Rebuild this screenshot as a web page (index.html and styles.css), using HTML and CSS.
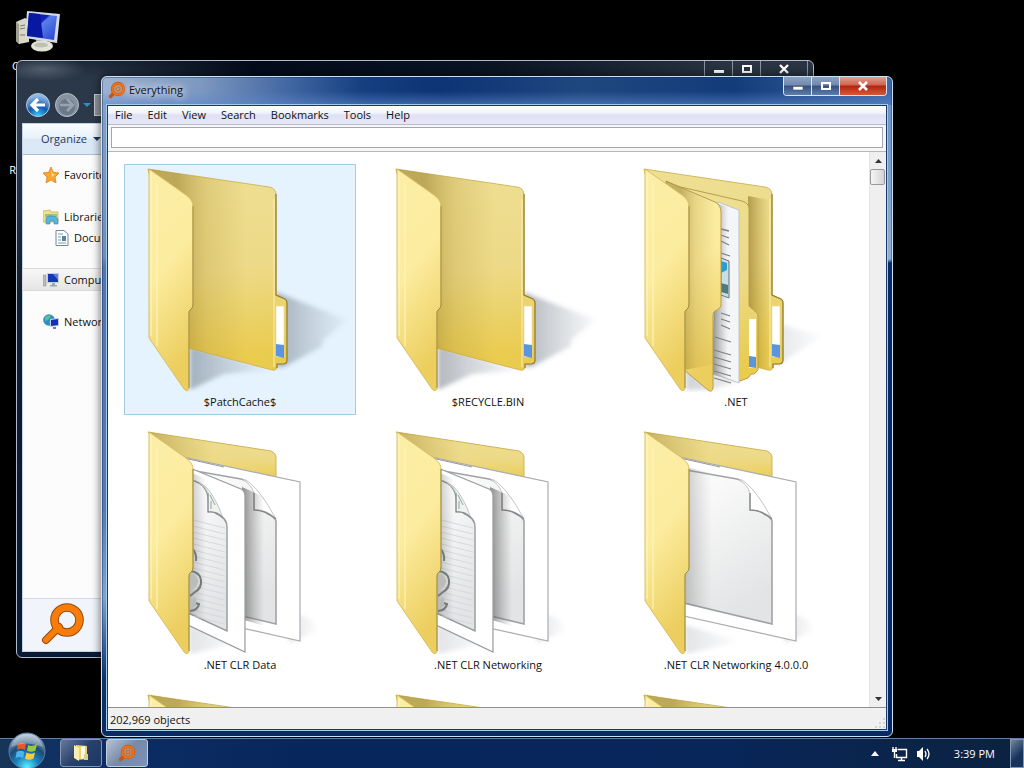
FILE: index.html
```html
<!DOCTYPE html>
<html lang="en">
<head>
<meta charset="utf-8">
<title>Everything</title>
<link rel="stylesheet" href="styles.css">
</head>
<body>
<svg class="defs" aria-hidden="true">
  <defs>
    <linearGradient id="flap" x1="0" y1="0" x2="0.25" y2="1"><stop offset="0" stop-color="#fbeea6"/><stop offset=".5" stop-color="#fcec9f"/><stop offset="1" stop-color="#ecce5e"/></linearGradient>
    <linearGradient id="back" x1="0" y1="0" x2="0.1" y2="1"><stop offset="0" stop-color="#eedf93"/><stop offset=".55" stop-color="#edda88"/><stop offset="1" stop-color="#e9cb4e"/></linearGradient>
    <linearGradient id="shade" x1="0" x2="1"><stop offset="0" stop-color="#8b7220" stop-opacity=".6"/><stop offset="1" stop-color="#a88a2c" stop-opacity="0"/></linearGradient>
    <linearGradient id="deep" x1="0" x2="1"><stop offset=".3" stop-color="#8b7220" stop-opacity=".5"/><stop offset=".6" stop-color="#a88a2c" stop-opacity=".22"/><stop offset="1" stop-color="#a88a2c" stop-opacity="0"/></linearGradient>
    <linearGradient id="gray" x1="0" x2="1"><stop offset="0" stop-color="#555" stop-opacity=".65"/><stop offset="1" stop-color="#777" stop-opacity="0"/></linearGradient>
    <linearGradient id="sheet" x1="0" y1="0" x2="0.4" y2="1"><stop offset="0" stop-color="#fff"/><stop offset="1" stop-color="#e3e4e5"/></linearGradient>
    <linearGradient id="cast" x1="0" x2="1"><stop offset="0" stop-color="#4b5563" stop-opacity=".42"/><stop offset="1" stop-color="#6b7686" stop-opacity=".04"/></linearGradient>
    <filter id="soft" x="-20%" y="-20%" width="140%" height="140%"><feGaussianBlur stdDeviation="2"/></filter>
    <symbol id="front" viewBox="0 0 232 228">
      <path d="M25 5 62 31Q69 36 69 42V141Q69 144 66 146 65 147 65 150V224Q64 229 60 225L25 174Z" fill="url(#flap)" stroke="#d9bf66"/>
      <path d="M27 8V172M33 20V182" stroke="#fff6bd" stroke-width="1.5" opacity=".7"/>
      <path d="M69 42V141Q69 144 66 146 65 147 65 150V224" fill="none" stroke="#9f8a40"/>
    </symbol>
    <symbol id="rear" viewBox="0 0 232 228">
      <path d="M24 5 145 23Q152 24 152 31V131L161 135Q163 136 163 139V196Q163 200 159 200H153V204Q152 207 148 206L64 184Z" fill="url(#back)" stroke="#d2b85e"/>
      <path d="M152 30V131L161 135Q163 136 163 139V196Q163 200 159 200H153V204" fill="none" stroke="#957d30" stroke-width="1.2"/>
      <path d="M150 35V203" stroke="#faeeb0"/>
      <path d="M152 142H160V193H152Z" fill="#fff" stroke="#e9d8a0" stroke-width=".7"/>
      <path d="M152 180 160 181V194L152 192Z" fill="#5b94df"/>
    </symbol>
    <symbol id="folder" viewBox="0 0 232 228">
      <path d="M152 128 224 156 199 176V182L160 203H152Z" fill="url(#cast)" filter="url(#soft)"/>
      <path d="M66 182 148 206 100 210 66 226Z" fill="url(#cast)" filter="url(#soft)"/>
      <use href="#rear"/>
      <path d="M24 5 122 20V200L64 184Z" fill="url(#deep)"/>
      <use href="#front"/>
    </symbol>
    <symbol id="folder-full" viewBox="0 0 232 228">
      <path d="M152 158 202 172 160 200H152Z" fill="url(#cast)" opacity=".4" filter="url(#soft)"/>
      <path d="M66 205 150 206 92 226H66Z" fill="url(#cast)" opacity=".6" filter="url(#soft)"/>
      <use href="#rear"/>
      <path d="M128 32 150 36V206L138 203V151L129 145Z" fill="url(#shade)"/>
      <path d="M52 21 122 37Q129 39 129 45V142L136 148Q138 149 138 153V206L134 210H131L128 214 120 217 92 210Z" fill="url(#back)" stroke="#b89e4c"/>
      <path d="M129 155H136V204H129Z" fill="#fff"/><path d="M129 192 136 193V204L129 203Z" fill="#5b94df"/>
      <path d="M98 38 119 46V219L92 209Z" fill="#f4f5f6" stroke="#c0c4c8"/>
      <path d="M98 40 108 43V215L92 209Z" fill="url(#gray)"/>
      <path d="M101 65l8 2m-8 4 8 3m-8 3 8 4m-8 8 9 3m-9 57 9 3m-9 3 9 3m-9 3 9 4m-15 8 16 5m-17 8 17 5m-17 2 17 5m-17 2 17 5m-17 2 17 5m-17 2 17 5" stroke="#7b8083" stroke-width="1.3"/>
      <path d="M101 94 109 97V134L101 131Z" fill="#c8dde6" stroke="#65747d"/><path d="M101 97l6 2v7l-6 3Z" fill="#2c9dcc"/><path d="M101 119l7 2v9l-7-2Z" fill="#4d7b80"/>
      <path d="M46 17 95 38Q101 41 101 48V141Q101 144 97 146 93 147 93 151V224Q92 229 88 226L64 206Z" fill="url(#flap)" stroke="#b89e4c"/>
      <path d="M46 17 96 39V200L64 206Z" fill="url(#deep)"/>
      <use href="#front"/>
    </symbol>
    <symbol id="docbase" viewBox="0 0 232 228">
      <path d="M165 185 188 192 194 203 165 216Z" fill="url(#cast)" opacity=".4" filter="url(#soft)"/>
      <path d="M64 198 120 214 66 227Z" fill="url(#cast)" opacity=".4" filter="url(#soft)"/>
      <path d="M24 5 147 24Q152 26 152 31V60L64 40Z" fill="url(#back)" stroke="#cfb456"/>
      <path d="M24 5 90 16V34L64 36Z" fill="url(#shade)" opacity=".7"/>
      <path d="M59 30 176 55V214L64 189Z" fill="#fff" stroke="#a9acaf" stroke-width="1.2"/>
      <path d="M60 31 100 40" stroke="#96989a"/>
      <path d="M66 43 117 52Q126 54 131 65 136 84 146 88 152 91 152 95V197L64 176Z" fill="url(#sheet)" stroke="#a0a3a6" stroke-width="1.6"/>
      <path d="M119 53Q127 57 130 66V83Q142 83 152 92 138 66 126 56 122 52 119 53Z" fill="#fff" stroke="#c3c5c7"/>
      <path d="M130 66V83Q142 83 152 92" fill="none" stroke="#85888b" stroke-width="1.4"/>
    </symbol>
    <symbol id="folder-doc" viewBox="0 0 232 228">
      <use href="#docbase"/>
      <path d="M66 40 92 46V183L64 176Z" fill="url(#gray)" opacity=".5"/>
      <use href="#front"/>
    </symbol>
    <symbol id="folder-docs" viewBox="0 0 232 228">
      <use href="#docbase"/>
      <path d="M118 60 140 70V199L120 193Z" fill="url(#gray)"/>
      <path d="M66 41 117 62Q121 64 121 69V225L64 198Z" fill="#fff" stroke="#979a9e" stroke-width="1.2"/>
      <path d="M66 52 75 56Q82 60 84 70 86 85 95 88 103 92 103 100V204L64 186Z" fill="url(#sheet)" stroke="#95999d" stroke-width="1.4"/>
      <path d="M69 93l32 8m-32-2 32 8m-32-2 32 8m-32-2 32 8m-32-2 32 8m-32-2 32 8m-32-2 32 8m-32-2 32 8m-32-2 32 8m-32-2 32 8m-32-2 32 8m-32-2 32 8m-32-2 32 8m-32-2 32 8m-32-2 32 8m-32-2 32 8m-32-2 32 8" stroke="#cfd5dd" stroke-width=".8"/>
      <path d="M76 56Q82 60 84 66V85Q93 84 99 91 91 69 82 60Z" fill="#f0f2f0" stroke="#c0c4c5"/>
      <path d="M84 66V85Q93 84 99 91" fill="none" stroke="#818689" stroke-width="1.2"/>
      <path d="M86 68l5 10M87 74v8" stroke="#8aa398"/>
      <path d="M66 45 82 52V194L64 186Z" fill="url(#gray)" opacity=".6"/>
      <path d="M69 122q4 6 3 12M66 144q10 1 11 9t-6 12l-5 4M66 184q8-1 9-7l-4-1" fill="none" stroke="#747b79" stroke-width="2"/>
      <path d="M66 147q8 1 8 7t-8 9ZM66 172l6-1v8l-6 3Z" fill="#b9bcb9"/>
      <use href="#front"/>
    </symbol>
    <symbol id="magnifier" viewBox="0 0 44 44">
      <path d="M18 25 5 38" stroke="#8e4b13" stroke-width="8" stroke-linecap="round"/>
      <circle cx="26" cy="18" r="12.5" fill="none" stroke="#8e4b13" stroke-width="8.6"/>
      <path d="M18 25 5 38" stroke="#f97b08" stroke-width="6" stroke-linecap="round"/>
      <circle cx="26" cy="18" r="12.5" fill="none" stroke="#f97b08" stroke-width="6.6"/>
    </symbol>
    <symbol id="magnifier-small" viewBox="0 0 18 18">
      <path d="M6 12 2.500 15.500" stroke="#c9540e" stroke-width="3.400" stroke-linecap="round"/>
      <circle cx="10" cy="8" r="5.600" fill="#cf9468" fill-opacity=".6" stroke="#c9540e" stroke-width="3.200"/>
      <circle cx="10" cy="8" r="5.600" fill="none" stroke="#ee7418" stroke-width="2"/>
      <circle cx="10" cy="8" r="2" fill="none" stroke="#d96a22" stroke-width="1.2"/>
    </symbol>
    <linearGradient id="screen" x1="0" x2="1" y2="1"><stop offset="0" stop-color="#0a1ba6"/><stop offset=".4" stop-color="#0d22b8"/><stop offset=".45" stop-color="#5a80e8"/><stop offset="1" stop-color="#2440d4"/></linearGradient>
    <radialGradient id="orb" cx=".5" cy=".95" r=".9"><stop offset="0" stop-color="#5ff0ff"/><stop offset=".35" stop-color="#1b86c0"/><stop offset=".65" stop-color="#1c4b78"/><stop offset="1" stop-color="#a8bccd"/></radialGradient>
    <radialGradient id="backblue" cx=".5" cy="1" r=".9"><stop offset="0" stop-color="#37d5ff"/><stop offset=".5" stop-color="#125ab0"/><stop offset="1" stop-color="#8fb8e4"/></radialGradient>
  </defs>
</svg>

<main class="desktop">
  <div class="shortcut computer">
    <svg width="46" height="44" viewBox="0 0 46 44" aria-hidden="true">
      <path d="M1 12 10 8 14 10V32L4 34 1 31Z" fill="#d9d8c8"/><path d="M1 12 4 14V34L1 31Z" fill="#9d9d90"/><path d="M5 16 10 15M5 19 10 18M5 25 11 25" stroke="#77776d"/>
      <path d="M20 28H32L31 36H23Z" fill="#a9aaa2"/><ellipse cx="27" cy="36" rx="11" ry="5.5" fill="#e3e3d7"/><ellipse cx="26" cy="35" rx="7" ry="2.5" fill="#bfc0b5"/>
      <path d="M12 1 45 4 42 33 10 28Z" fill="#d5d9e2"/><path d="M14 3 42 6 39 30 12 26Z" fill="url(#screen)"/><path d="M14 3 25 4 28 28 12 26Z" fill="#0818a0"/>
    </svg>
    <span>Computer</span>
  </div>
  <div class="shortcut bin"><span>Recycle Bin</span></div>

  <section class="window explorer" aria-label="Computer">
    <div class="caption" role="group" aria-label="Window controls">
      <button aria-label="Minimize"><svg width="12" height="10" viewBox="0 0 12 10"><path d="M1 6H11V9H1Z" fill="#fff"/></svg></button>
      <button aria-label="Maximize"><svg width="12" height="10" viewBox="0 0 12 10"><path d="M2 2H10V8H2Z" fill="none" stroke="#fff" stroke-width="2"/></svg></button>
      <button class="close" aria-label="Close"><svg width="12" height="10" viewBox="0 0 12 10"><path d="M2 1 10 9M10 1 2 9" stroke="#fff" stroke-width="2.4"/></svg></button>
    </div>
    <nav class="travel" aria-label="History">
      <button aria-label="Back"><svg width="26" height="26" viewBox="0 0 26 26"><circle cx="13" cy="13" r="11.5" fill="url(#backblue)" stroke="#b4c9de"/><path d="M20 13H8M13 7 7 13 13 19" fill="none" stroke="#fff" stroke-width="3.2"/></svg></button>
      <button aria-label="Forward"><svg width="26" height="26" viewBox="0 0 26 26"><circle cx="13" cy="13" r="11.5" fill="#8792a0" stroke="#b5bfca"/><circle cx="13" cy="15" r="8" fill="#6d7886"/><path d="M6 13H18M13 7 19 13 13 19" fill="none" stroke="#98a3af" stroke-width="2.6"/></svg></button>
      <svg width="8" height="6" viewBox="0 0 8 6" aria-hidden="true"><path d="M0 1H8L4 5Z" fill="#2f8fc4"/></svg>
      <span class="address"></span>
    </nav>
    <div class="pane">
      <div class="commands"><button>Organize <svg width="8" height="5" viewBox="0 0 8 5"><path d="M0 0H8L4 4Z" fill="#1e395b"/></svg></button></div>
      <ul class="tree">
        <li><a href="#favorites"><svg width="16" height="16" viewBox="0 0 16 16"><path d="M8 0 10.300 5.300 16 6 12 10 13 16 8 13 3 16 4 10 0 6 5.700 5.300Z" fill="#f9a72b" stroke="#d9802a" stroke-width=".8"/><path d="M8 3 9.500 7 12 7 9 10Z" fill="#ffe28a"/></svg>Favorites</a></li>
        <li class="group"><a href="#libraries"><svg width="16" height="16" viewBox="0 0 16 16"><path d="M0 2 7 1 8 3H15V13H0Z" fill="#f3df86" stroke="#c0aa58" stroke-width=".7"/><path d="M2 5H14V8H2Z" fill="#8cc886"/><path d="M3 15V10Q3 7 8 7T15 10V15H11V12H7V15Z" fill="#59b5dd" stroke="#3787b0" stroke-width=".6"/></svg>Libraries</a></li>
        <li class="child"><a href="#documents"><svg width="14" height="16" viewBox="0 0 14 16"><path d="M1 .5H9L13 4V15.500H1Z" fill="#fff" stroke="#6f8a99"/><path d="M3 4H8M3 7H6M3 10H6M3 13H11" stroke="#7f9dad"/><path d="M7 6H11V11H7Z" fill="#4f889e"/></svg>Documents</a></li>
        <li class="group chosen"><a href="#computer"><svg width="16" height="16" viewBox="0 0 16 16"><path d="M0 3H3V14H0Z" fill="#b9bdb9" stroke="#858985" stroke-width=".5"/><path d="M4 1H16V11H4Z" fill="#c7cdda"/><path d="M5 2H15V10H5Z" fill="#1537bd"/><path d="M10 2H15V8Z" fill="#5b82e2"/><path d="M9 11H12V13H14V14.500H7V13H9Z" fill="#97a8bb"/></svg>Computer</a></li>
        <li class="group"><a href="#network"><svg width="16" height="16" viewBox="0 0 16 16"><circle cx="6" cy="6" r="5.800" fill="#2e8fc6"/><path d="M2 3Q6 0 8 2L5 6 2 7ZM6 8 9 7 8 11Z" fill="#5ec08d"/><path d="M7 5 16 4V12L7 13Z" fill="#c1ccdd"/><path d="M8 6 15 5V11L8 12Z" fill="#142fbb"/><path d="M10 13H13V15H10Z" fill="#6a7ec4"/></svg>Network</a></li>
      </ul>
      <div class="details"><svg width="44" height="44" aria-hidden="true"><use href="#magnifier"/></svg></div>
    </div>
  </section>

  <section class="window everything" aria-label="Everything">
    <header class="titlebar">
      <svg width="18" height="18" aria-hidden="true"><use href="#magnifier-small"/></svg>
      <h1>Everything</h1>
      <div class="caption bright" role="group" aria-label="Window controls">
        <button aria-label="Minimize"><svg width="12" height="10" viewBox="0 0 12 10"><path d="M1 5.500H11V9H1Z" fill="#fff" stroke="#44536b" stroke-width=".6"/></svg></button>
        <button aria-label="Maximize"><svg width="12" height="10" viewBox="0 0 12 10"><path d="M2 2H10V8H2Z" fill="none" stroke="#fff" stroke-width="2"/></svg></button>
        <button class="close" aria-label="Close"><svg width="12" height="10" viewBox="0 0 12 10"><path d="M2 1 10 9M10 1 2 9" stroke="#fff" stroke-width="2.600"/></svg></button>
      </div>
    </header>
    <div class="client">
      <nav class="menubar" aria-label="Menu">
        <button>File</button><button>Edit</button><button>View</button><button>Search</button><button>Bookmarks</button><button>Tools</button><button>Help</button>
      </nav>
      <div class="searchbar"><input type="text" aria-label="Search"></div>
      <div class="results">
        <ul class="grid">
          <li class="item selected"><svg viewBox="0 0 232 228"><use href="#folder"/></svg><span>$PatchCache$</span></li>
          <li class="item"><svg viewBox="0 0 232 228"><use href="#folder"/></svg><span>$RECYCLE.BIN</span></li>
          <li class="item"><svg viewBox="0 0 232 228"><use href="#folder-full"/></svg><span>.NET</span></li>
          <li class="item"><svg viewBox="0 0 232 228"><use href="#folder-docs"/></svg><span>.NET CLR Data</span></li>
          <li class="item"><svg viewBox="0 0 232 228"><use href="#folder-docs"/></svg><span>.NET CLR Networking</span></li>
          <li class="item"><svg viewBox="0 0 232 228"><use href="#folder-doc"/></svg><span>.NET CLR Networking 4.0.0.0</span></li>
          <li class="item"><svg viewBox="0 0 232 228"><use href="#folder"/></svg></li>
          <li class="item"><svg viewBox="0 0 232 228"><use href="#folder"/></svg></li>
          <li class="item"><svg viewBox="0 0 232 228"><use href="#folder"/></svg></li>
        </ul>
        <div class="scrollbar">
          <button aria-label="Scroll up"><svg width="7" height="4" viewBox="0 0 7 4"><path d="M0 4H7L3.500 0Z" fill="#333"/></svg></button>
          <span class="thumb"></span>
          <button class="down" aria-label="Scroll down"><svg width="7" height="4" viewBox="0 0 7 4"><path d="M0 0H7L3.500 4Z" fill="#333"/></svg></button>
        </div>
      </div>
      <footer class="status"><span>202,969 objects</span><svg width="12" height="12" viewBox="0 0 12 12" aria-hidden="true"><path d="M9 1h2v2H9zM9 5h2v2H9zM9 9h2v2H9zM5 5h2v2H5zM5 9h2v2H5zM1 9h2v2H1z" fill="#d3d3d3"/></svg></footer>
    </div>
  </section>

  <footer class="taskbar">
    <button class="start" aria-label="Start"><svg width="38" height="38" viewBox="0 0 38 38">
      <circle cx="19" cy="19" r="18" fill="url(#orb)" stroke="#5e7f9e"/>
      <path d="M10 12Q14 9 18 12L17 18Q13 15.500 9 18Z" fill="#e8572a"/><path d="M20 13Q24 15.500 29 12L27.500 18.500Q23 21 19 18.500Z" fill="#9ac93b"/><path d="M8.500 20Q12 17.500 16.500 20L15 26Q11 24 7.500 26.500Z" fill="#4fb2ea"/><path d="M18.500 20.500Q23 23 27 20.500L25.500 26.500Q21 29 17 26.500Z" fill="#fbcd3a"/>
      <path d="M3 15Q8 2 19 2T35 15Q19 8 3 15Z" fill="#fff" opacity=".28"/>
    </svg></button>
    <button class="task" aria-label="Windows Explorer"><svg width="16" height="18" viewBox="0 0 16 18"><path d="M3 1 14 2V15L4 16Z" fill="#e9d27a"/><path d="M8 3 12 2V14L8 15Z" fill="#fffbe0"/><path d="M1 1 6 4V17L1 14Z" fill="#fbeeb0"/><path d="M11 10H15V16H11Z" fill="#d9cf93"/></svg></button>
    <button class="task active" aria-label="Everything"><svg width="18" height="18"><use href="#magnifier-small"/></svg></button>
    <div class="tray">
      <button aria-label="Show hidden icons"><svg width="8" height="5" viewBox="0 0 8 5"><path d="M0 5H8L4 0Z" fill="#fff"/></svg></button>
      <svg class="network" width="16" height="16" viewBox="0 0 16 16" role="img" aria-label="Network"><path d="M5.500 3.500H14.500V11.500H4.500V8M9.500 12V14M6 14.500H13M2.500 6V12M1 1V4M4 1V4" fill="none" stroke="#fff" stroke-width="1.4"/><path d="M0 3H5V6H0Z" fill="#fff"/></svg>
      <svg class="sound" width="16" height="16" viewBox="0 0 16 16" role="img" aria-label="Volume"><path d="M1 5H3L7 1V15L3 11H1Z" fill="#fff"/><path d="M9 5Q11 8 9 11M11 3Q15 8 11 13" fill="none" stroke="#fff" stroke-width="1.300"/></svg>
      <time>3:39 PM</time>
      <button class="peek" aria-label="Show desktop"></button>
    </div>
  </footer>
</main>
</body>
</html>
```

FILE: styles.css
```css
* { box-sizing: border-box; }
html, body { height: 100%; margin: 0; }
body { background: #000; color: #111; font: 11px/16px "Open Sans", "Noto Sans", sans-serif; overflow: hidden; }
button { background: none; border: 0; padding: 0; font: inherit; color: inherit; display: flex; align-items: center; justify-content: center; }
ul { list-style: none; margin: 0; padding: 0; }
a { color: inherit; text-decoration: none; }
svg { flex: none; display: block; }
.defs { position: absolute; width: 0; height: 0; }

.desktop { position: relative; height: 100%; }
.shortcut { position: absolute; left: 0; width: 76px; display: flex; flex-direction: column; align-items: center; gap: 4px; color: #fff; }
.computer { top: 10px; }
.bin { top: 162px; }

.window { position: absolute; display: flex; flex-direction: column; border: 1px solid #aebccb; border-radius: 6px; }

/* Explorer */
.explorer {
  inset: 60px 210px 110px 16px;
  padding: 0 5px 5px;
  background:
    radial-gradient(ellipse 44px 12px at 26px 8px, #6b7584aa, transparent),
    linear-gradient(90deg, transparent 10%, #030b1a 30%, #0a1422 60%, #2a3442 90%) top / 100% 17px no-repeat,
    linear-gradient(180deg, #1c2736 0, #2a3747 16px, #2c3a4c 64px, #101c2c 240px, #0b1a34 100%);
}
.caption { display: flex; height: 17px; align-self: flex-end; }
.caption button { width: 28px; border: 1px solid #8793a2; border-top: 0; border-right: 0; }
.caption .close { width: 48px; border-right: 1px solid #8793a2; }
.travel { display: flex; align-items: center; gap: 3px; height: 45px; padding: 8px 0 0 3px; }
.address { width: 200px; height: 22px; background: #8d949c; border: 1px solid #c4cad0; }
.pane { flex: 1; display: flex; flex-direction: column; border: 1px solid #c3d4e8; background: #fcfcfc; }
.commands { height: 31px; display: flex; padding-left: 18px; color: #1e395b; background: linear-gradient(#fafdff, #e6f0fa 50%, #dce7f4 50%, #dbe9f6); border-bottom: 1px solid #a9bdd2; }
.commands button { gap: 6px; }
.tree { flex: 1; padding-top: 9px; }
.tree li { height: 21px; padding-left: 20px; }
.tree a { display: flex; align-items: center; gap: 5px; height: 100%; }
.tree .group { margin-top: 21px; }
.tree .child { padding-left: 32px; }
.tree .chosen { background: linear-gradient(#f8f8f8, #e5e5e6); box-shadow: 0 0 0 1px #d9d9d9; }
.details { height: 53px; padding: 3px 0 0 18px; background: #f1f5fb; border-top: 1px solid #d0dae8; }

/* Everything */
.everything {
  inset: 76px 131px 31px 101px;
  padding: 0 5px 6px;
  border-color: #c8e4f4;
  background:
    linear-gradient(transparent 50%, #5c86cc99) top / 100% 28px no-repeat,
    linear-gradient(90deg, #9fb2d0 0, #7c97c0 100px, #466aa4 180px, #143f80 260px, #0d3474 340px, #1f477f 480px, #123c7a 80%, #3e6aa8 100%) top / 100% 28px no-repeat,
    linear-gradient(#6a8fc0, #92b0d0 182px, #0c2b66 186px, #0a2862) right / 50% 100% no-repeat,
    linear-gradient(#8aa4c8, #6d8dbb 180px, #5474b4 190px, #5777b8 430px, #7da3d3 520px, #0d3472 600px, #0a2862) left / 50% 100% no-repeat;
  box-shadow: inset 0 0 0 1px #0c2a5c66, 0 0 8px 1px #0008;
}
.titlebar { height: 28px; display: flex; align-items: center; gap: 3px; padding: 0 0 2px 1px; }
.titlebar h1 { flex: 1; margin: 0; font: inherit; text-shadow: 0 0 8px #fff, 0 0 8px #fffc; }
.caption.bright { height: 19px; align-self: flex-start; border: 1px solid #d9e4f0; border-top: 0; border-radius: 0 0 4px 4px; overflow: hidden; }
.bright button { border: 0; border-right: 1px solid #d9e4f0; background: linear-gradient(#8ba2c4, #7389ac 45%, #35507e 50%, #5c7dae); }
.bright .close { width: 46px; border: 0; background: linear-gradient(#e0a090, #cd6350 45%, #b3230c 50%, #d65a35); }
.client { flex: 1; min-height: 0; display: flex; flex-direction: column; border: 1px solid #173a70; background: #fff; box-shadow: 0 0 0 1px #a5cbe8; }
.menubar { display: flex; gap: 1px; height: 19px; background: linear-gradient(#fff, #f0f3fb 40%, #dfe0f4 50%, #e6e7f6); border-bottom: 1px solid #b9bccb; }
.menubar button { padding: 0 7px; }
.searchbar { display: flex; padding: 2px 3px 3px; height: 27px; background: #f6f6f6; border-bottom: 1px solid #b6b6b6; }
.searchbar input { flex: 1; min-width: 0; border: 1px solid #a3a6ad; background: #fff; padding: 0 4px; font: inherit; outline: 0; }
.results { flex: 1; min-height: 0; display: flex; overflow: hidden; }
.grid { flex: 1; display: grid; grid-template-columns: repeat(auto-fill, 232px); gap: 12px 16px; padding: 12px 0 0 16px; align-content: start; }
.item { display: flex; flex-direction: column; gap: 2px; height: 251px; text-align: center; }
.item svg { width: 100%; height: 228px; }
.item.selected { background: #e5f3fe; box-shadow: inset 0 0 0 1px #a3c9e3; }
.scrollbar { width: 17px; display: flex; flex-direction: column; background: #efefef; border-left: 1px solid #e4e4e4; }
.scrollbar button { height: 17px; }
.thumb { height: 16px; border: 1px solid #999; border-radius: 2px; background: linear-gradient(90deg, #f6f6f6, #d3d3d8); margin-right: 1px; }
.scrollbar .down { margin-top: auto; }
.status { height: 22px; display: flex; align-items: center; justify-content: space-between; padding: 2px 0 0 2px; background: #f0f0f0; border-top: 1px solid #8f8f8f; }
.status svg { align-self: flex-end; }

/* Taskbar */
.taskbar { position: absolute; inset: auto 0 0; height: 30px; display: flex; align-items: stretch; gap: 4px; padding-left: 8px; color: #fff; border-top: 1px solid #5f7fa8; background: linear-gradient(90deg, #153558 0, #0d2f66 80px, #07265c 300px, #08265a 70%, #0b2240); }
.start { width: 38px; margin: -7px 10px 0 0; height: 38px; }
.task { width: 42px; margin: 0 0 1px; border: 1px solid #8496b2; border-radius: 3px; background: linear-gradient(135deg, #66789a, #27406c 50%, #1c3663); }
.task.active { border-color: #c2cddd; background: linear-gradient(135deg, #b5c2d5, #7689a8 50%, #7c93b8); }
.tray { flex: 1; display: flex; align-items: center; justify-content: flex-end; }
.network { margin-left: 13px; }
.sound { margin-left: 8px; }
.tray time { margin: 0 15px 0 22px; }
.peek { align-self: stretch; width: 14px; border: 1px solid #8297b3; background: linear-gradient(135deg, #7487a3, #17325b 60%); }
```
